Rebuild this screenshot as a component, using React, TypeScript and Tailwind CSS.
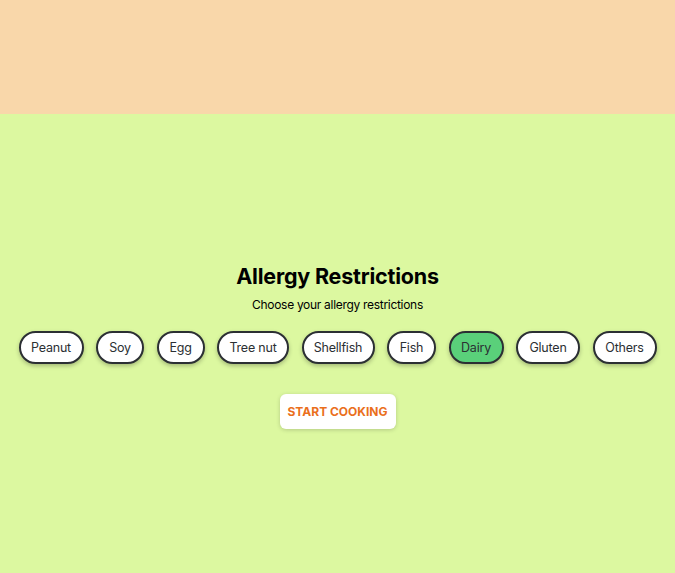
import { useState } from 'react';

const ALLERGIES: { name: string; w: string }[] = [
  { name: 'Peanut', w: 'w-[65px]' },
  { name: 'Soy', w: 'w-[48px]' },
  { name: 'Egg', w: 'w-[48px]' },
  { name: 'Tree nut', w: 'w-[72px]' },
  { name: 'Shellfish', w: 'w-[73px]' },
  { name: 'Fish', w: 'w-[49px]' },
  { name: 'Dairy', w: 'w-[55px]' },
  { name: 'Gluten', w: 'w-[64px]' },
  { name: 'Others', w: 'w-[64px]' },
];

export default function App() {
  const [selected, setSelected] = useState<string[]>(['Dairy']);

  const toggle = (name: string) => {
    setSelected((prev) => (prev.includes(name) ? prev.filter((n) => n !== name) : [...prev, name]));
  };

  return (
    <div className="flex min-h-[573px] flex-col bg-[#dcf8a0] font-['Inter','Helvetica',sans-serif] text-black">
      <header className="h-[114px] bg-[#f9d7aa]" />

      <main className="flex flex-col items-center pt-[150px]">
        <h1 className="text-[21.5px] font-bold leading-[24px] tracking-[-0.2px]">Allergy Restrictions</h1>
        <p className="mt-[9px] text-[12px] leading-[16px] tracking-[-0.3px]">Choose your allergy restrictions</p>

        <div className="mt-[18px] flex gap-[12.5px]">
          {ALLERGIES.map(({ name, w }) => {
            const on = selected.includes(name);
            return (
              <button
                key={name}
                onClick={() => toggle(name)}
                className={`h-[33px] ${w} rounded-full border-2 border-[#2b2f33] pt-[2px] text-[12.5px] tracking-[-0.2px] text-[#2b2f33] shadow-[0_2px_4px_rgba(0,0,0,0.25)] ${
                  on ? 'bg-[#5ad07a]' : 'bg-white'
                }`}
              >
                {name}
              </button>
            );
          })}
        </div>

        <button className="mt-[30px] h-[35px] w-[116px] rounded-md bg-white text-[12px] font-bold text-[#ea6f1c] shadow-[0_1px_4px_rgba(0,0,0,0.18)]">
          START COOKING
        </button>
      </main>
    </div>
  );
}
